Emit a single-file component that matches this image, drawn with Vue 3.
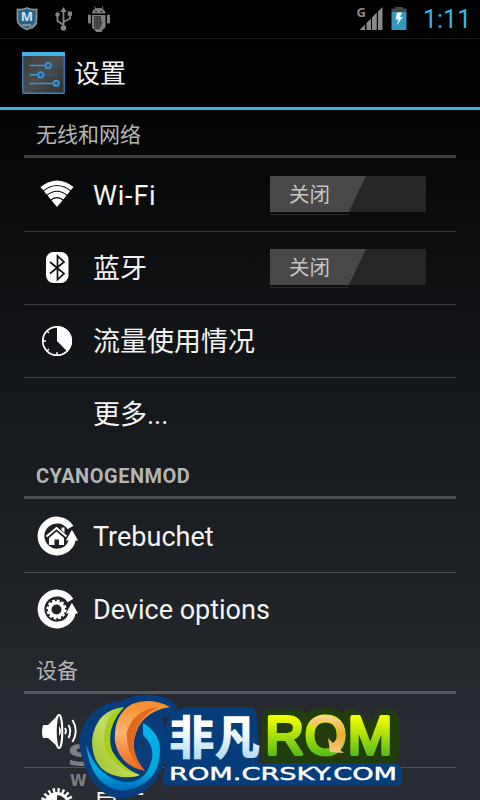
<template>
  <div class="screen">
    <div class="status-bar">
      <svg class="status-left" width="120" height="38" viewBox="0 0 120 38">
        <path d="M17.500 9.500Q22 10 27 8Q32 10 36.500 9.500V20Q36 26 27 29.500Q18 26 17.500 20Z" fill="#24668f" stroke="#8b8f91" stroke-width="1.800" />
        <text x="27" y="21" class="shield-letter">M</text>
        <path d="M22 25H31M29 24L32 28L37 23" stroke="#85929a" stroke-width="1.800" fill="none" />
        <g stroke="#858585" stroke-width="1.800" fill="none">
          <path d="M63.500 28V11M63.500 25L57.500 21V15.500M63.500 22L70 18.500V14" />
        </g>
        <g fill="#858585">
          <path d="M60.300 12L63.500 7L66.700 12Z" />
          <circle cx="63.500" cy="28" r="2.800" />
          <circle cx="57.500" cy="14.500" r="2.200" />
          <rect x="67.700" y="11.500" width="4.300" height="4.300" />
        </g>
        <g fill="#7f7f7f">
          <path d="M92 13.500Q92.500 8 98.700 8T105.500 13.500Z" />
          <path d="M94.500 6.500L96 9.500M103 6.500L101.500 9.500" stroke="#7f7f7f" />
          <path d="M92 15H105.500V27Q105 29 103 29L101.500 32H96L94 29Q92 29 92 27Z" />
          <rect x="88" y="14.500" width="3" height="9" rx="1" />
          <rect x="107" y="14.500" width="3" height="9" rx="1" />
        </g>
        <path d="M94 16H101V20L102.500 22L100 29H95L94 27Z" fill="#3b3b3b" />
        <path d="M95 18H101M95 21H102M95 24H101M95 27H100" stroke="#858585" stroke-width=".8" stroke-dasharray="1.500 1.500" />
        <circle cx="96" cy="11.500" r=".8" /><circle cx="101.500" cy="11.500" r=".8" />
      </svg>
      <svg class="status-right" width="60" height="38" viewBox="350 0 60 38">
        <text x="356.500" y="17.300" class="network">G</text>
        <path d="M359.500 30L365 24.500V30ZM366.500 30V23L371 18.500V30ZM372 30V17.500L376.800 12.500V30ZM378 30V11.500L382.500 7V30Z" fill="#898989" />
        <path d="M391.500 12V8.500H395V7H403V8.500H406.500V12Z" fill="#484848" />
        <rect x="391.500" y="12" width="15" height="18" fill="#3298bf" />
        <path d="M397 12.500H402L400 17H403L396.500 25.500L398.500 19.500H395.500Z" fill="#f1f6f8" />
      </svg>
      <span class="clock">1:11</span>
    </div>

    <header class="action-bar">
      <svg width="44" height="42" viewBox="0 0 44 42">
        <defs>
          <linearGradient id="tile" x1="0" y1="0" x2="1" y2="1">
            <stop offset="0" stop-color="#3c3c3c" />
            <stop offset=".5" stop-color="#4c4c4c" />
            <stop offset="1" stop-color="#303030" />
          </linearGradient>
        </defs>
        <rect x=".75" y=".75" width="41.500" height="40.500" rx="1" fill="url(#tile)" stroke="#2d86c8" stroke-width="1.300" />
        <path d="M0 4V1Q0 0 1 0H42Q43 0 43 1V4Z" fill="#41b4ea" />
        <path d="M7.500 13.500H23.500M7.500 22.800H16M7.500 31.500H31" stroke="#3396e0" stroke-width="1.500" />
        <path d="M29 13.500H36M21 22.800H36" stroke="#275d8a" stroke-width="1.300" />
        <g fill="#3e5568" stroke="#3594dc" stroke-width="1.800">
          <circle cx="26.200" cy="13.500" r="2.700" /><circle cx="18.800" cy="22.800" r="2.700" /><circle cx="34.200" cy="31.300" r="2.700" />
        </g>
      </svg>
      <h1>设置</h1>
    </header>

    <section v-for="section in sections" :key="section.title" class="section">
      <h2 :class="{ latin: section.latin }">{{ section.title }}</h2>
      <div v-for="item in section.items" :key="item.label" class="row">
        <svg class="row-icon" width="48" height="48" viewBox="0 0 48 48">
          <template v-if="item.icon === 'wifi'">
            <path d="M7.500 16Q24 3 40.500 16L24 36Z" fill="#fff" />
            <path d="M9.500 20.500Q24 8.500 38.500 20.500M13 25Q24 15.500 35 25M17 29.700Q24 23.500 31 29.700" stroke="#0a0b0d" stroke-width="1.100" fill="none" />
          </template>
          <template v-if="item.icon === 'bluetooth'">
            <rect x="13" y="8" width="22.500" height="31" rx="7.500" fill="#fff" />
            <path d="M17 18L31 29.500L24.500 35.500V12L31 18L17 29.500" stroke="#0c0e10" stroke-width="1.700" fill="none" />
          </template>
          <template v-if="item.icon === 'usage'">
            <circle cx="24" cy="24" r="14.200" stroke="#fff" stroke-width="1.700" fill="none" />
            <path d="M24 24V9A15 15 0 0 1 34.500 34.800Z" fill="#fff" />
            <path d="M24 38V35M10 24H13M14 14L16 16M14 34L16 32" stroke="#fff" stroke-width="1.300" />
          </template>
          <template v-if="item.icon === 'home' || item.icon === 'gear'">
            <path d="M37.500 15.500A16 16 0 1 0 36.500 34Q39.500 30 39.500 25" stroke="#fff" stroke-width="6.800" fill="none" />
            <path d="M33 28.500L39 17.500L45 28.500Z" fill="#fff" />
            <path d="M33.500 24L38.800 16L43.500 23" stroke="#1c1f23" stroke-width="1.500" fill="none" />
          </template>
          <template v-if="item.icon === 'home'">
            <path d="M13.500 24.500L23.500 16L33.500 24.500" stroke="#fff" stroke-width="2" fill="none" />
            <path d="M16 26L23.500 19.500L31 26V33H26V27.500H21.500V33H16ZM28.500 15.500H31.500V21L28.500 18Z" fill="#fff" />
          </template>
          <template v-if="item.icon === 'gear'">
            <circle cx="23.500" cy="24.500" r="6.800" stroke="#fff" stroke-width="3.600" fill="none" />
            <circle cx="23.500" cy="24.500" r="9" stroke="#fff" stroke-width="2.200" stroke-dasharray="2.800 1.912" fill="none" />
          </template>
          <template v-if="item.icon === 'sound'">
            <path d="M10 18H15L25 8V40L15 31H10Q8 25 10 18Z" fill="#fff" />
            <ellipse cx="26" cy="24.500" rx="3.300" ry="16.500" fill="#292c32" stroke="#fff" stroke-width="2" />
            <path d="M26 19Q30 24 26 29Z" fill="#fff" />
            <path d="M32 21Q34 24 32 27M35.500 18Q39 24 35.500 31M39.500 13Q46 24 39.500 35" stroke="#fff" stroke-width="1.900" fill="none" />
          </template>
          <template v-if="item.icon === 'display'">
            <circle cx="24" cy="25" r="11.500" stroke="#fff" stroke-width="3" fill="none" />
            <circle cx="24" cy="25" r="14.500" stroke="#fff" stroke-width="5" stroke-dasharray="2.300 2.255" fill="none" />
            <path d="M24 13A12 12 0 0 0 24 37Z" fill="#fff" />
          </template>
        </svg>
        <span class="label" :class="item.script">{{ item.label }}</span>
        <div v-if="item.toggle" class="toggle"><span>{{ item.toggle }}</span></div>
      </div>
    </section>

    <svg class="watermark" width="360" height="110" viewBox="60 690 360 110">
      <defs>
        <linearGradient id="lime" gradientUnits="userSpaceOnUse" x1="0" y1="716" x2="0" y2="756">
          <stop offset="0" stop-color="#f7ff00" /><stop offset="1" stop-color="#55bb18" />
        </linearGradient>
        <linearGradient id="ice" gradientUnits="userSpaceOnUse" x1="0" y1="714" x2="0" y2="758">
          <stop offset=".3" stop-color="#fff" /><stop offset="1" stop-color="#b5dcf3" />
        </linearGradient>
        <linearGradient id="leaf" x1="0" y1="1" x2="1" y2="0">
          <stop offset="0" stop-color="#94bf20" /><stop offset=".5" stop-color="#c5dd62" /><stop offset="1" stop-color="#8cbd13" />
        </linearGradient>
        <linearGradient id="flame" x1="0" y1="0" x2="0" y2="1">
          <stop offset="0" stop-color="#f58b2a" /><stop offset=".45" stop-color="#fbb56d" /><stop offset="1" stop-color="#e96518" />
        </linearGradient>
        <linearGradient id="ring" x1="0" y1="0" x2="0" y2="1">
          <stop offset="0" stop-color="#05b4ef" /><stop offset=".75" stop-color="#00a5de" /><stop offset="1" stop-color="#0065b5" />
        </linearGradient>
        <linearGradient id="arrow" x1="0" y1="0" x2="0" y2="1">
          <stop offset="0" stop-color="#fbd795" /><stop offset=".5" stop-color="#f2a92f" /><stop offset="1" stop-color="#f8c88a" />
        </linearGradient>
      </defs>
      <text x="67" y="766" class="ghost ghost-big" textLength="88" lengthAdjust="spacingAndGlyphs">SKY</text>
      <text x="70" y="786" class="ghost ghost-small" textLength="170">WWW.</text>

      <!-- badge and lettering backdrops -->
      <path d="M80 750Q77 733 88 718Q100 702 121 701Q138 692 158 696Q176 699 177 710Q176 716 162 718Q171 740 164 764Q152 796 122 799Q90 796 80 750Z" fill="#073d7b" />
      <path d="M169 717Q175 708 190 707H240Q256 707 256 712L259 748Q262 757 257 763H394Q403 764 402 774V779Q402 786 394 786H170Q161 786 163 777Q164 769 166 765Q162 760 163 755L166 748Q162 744 164 739L167 734Q163 729 169 717Z" fill="#073d7b" />
      <path d="M262 718Q263 709 273 709H294Q301 709 306 713Q313 708 325 708Q337 708 342 713Q347 708 356 709L370 722L382 709Q397 707 399 720V753Q399 763 388 763H272Q260 763 261 752Z" fill="#213d0d" />

      <path d="M143 723Q160 733 160 750Q160 785 123 791Q91 788 86 744Q96 776 123 782Q145 784 151 762Q156 747 143 735Z" fill="url(#ring)" />
      <path d="M143 740V748L141 744Z" fill="#292d33" />
      <path d="M124 707Q96 710 92 740Q92 773 121 777Q134 778 140 775Q120 768 112 751Q101 724 124 707Z" fill="url(#leaf)" />
      <path d="M124 707Q103 716 104 741Q108 768 140 775Q122 768 112 751Q105 728 124 707Z" fill="#a7ce1c" />
      <path d="M170 707Q151 697 132 704Q113 715 115 742Q120 766 145 771Q132 756 134 740Q139 712 170 707Z" fill="url(#flame)" />
      <path d="M159 707Q134 709 127 732Q125 756 145 771Q132 756 134 740Q139 715 159 707Z" fill="#e06b20" />

      <text x="169" y="780" class="site" textLength="228" lengthAdjust="spacingAndGlyphs">ROM.CRSKY.COM</text>
      <text x="169" y="754" class="brand-cn" fill="url(#ice)" textLength="91" lengthAdjust="spacingAndGlyphs">非凡</text>
      <text y="754" class="brand-rom" fill="url(#lime)" stroke="url(#lime)"><tspan x="265.500">R</tspan><tspan x="305">O</tspan><tspan x="348">M</tspan></text>
      <path d="M309 724Q315 714 327 715Q343 717 345 733Q345 742 340 750L344 753L330 752L328 738L333 743Q338 739 338 731Q335 721 325 721Q318 721 315 727Z" fill="url(#arrow)" />
    </svg>
  </div>
</template>

<script setup>
const sections = [
  {
    title: '无线和网络',
    items: [
      { label: 'Wi-Fi', icon: 'wifi', toggle: '关闭', script: 'latin wide' },
      { label: '蓝牙', icon: 'bluetooth', toggle: '关闭' },
      { label: '流量使用情况', icon: 'usage' },
      { label: '更多...', icon: '' }
    ]
  },
  {
    title: 'CYANOGENMOD',
    latin: true,
    items: [
      { label: 'Trebuchet', icon: 'home', script: 'latin' },
      { label: 'Device options', icon: 'gear', script: 'latin' }
    ]
  },
  {
    title: '设备',
    items: [
      { label: '声音', icon: 'sound' },
      { label: '显示', icon: 'display' }
    ]
  }
]
</script>

<style>
body {
  background: #000;
  overflow: hidden;
}
</style>

<style scoped>
.screen {
  position: relative;
  width: 480px;
  height: 800px;
  overflow: hidden;
  background: linear-gradient(#000 0, #020303 100px, #0b0c0e 220px, #15181b 400px, #1e2226 580px, #272b31 720px, #292d33 800px);
  color: #f3f3f3;
  font-family: Roboto, "Noto Sans CJK SC", sans-serif;
}

.status-bar {
  display: flex;
  height: 38px;
  background: #000;
  border-bottom: 1px solid #171717;
}

.status-right {
  margin-left: 230px;
}

.clock {
  margin-left: 13px;
  color: #33b5e5;
  font-size: 25px;
  line-height: 40px;
  font-weight: 400;
}

.shield-letter {
  font: bold 13px "Open Sans", sans-serif;
  fill: #d5e1e8;
  text-anchor: middle;
}

.network {
  font: bold 13px "Open Sans", sans-serif;
  fill: #898989;
}

.action-bar {
  display: flex;
  height: 68px;
  padding-left: 22px;
  align-items: center;
  border-bottom: 3px solid #33b5e5;
}

h1 {
  margin: 0 0 0 8px;
  padding-bottom: 3px;
  font-size: 26px;
  font-weight: 400;
}

.section {
  padding: 0 24px;
}

h2 {
  height: 45px;
  margin: 0 0 1px;
  padding-left: 12px;
  border-bottom: 3px solid rgba(255, 255, 255, 0.22);
  color: #b5b5b5;
  font-size: 21px;
  font-weight: 400;
  line-height: 50px;
}

h2.latin {
  font-size: 20px;
  font-weight: 700;
  letter-spacing: 0.5px;
}

.row {
  display: flex;
  height: 72px;
  align-items: center;
  border-bottom: 1px solid rgba(255, 255, 255, 0.18);
}

.row:last-child {
  border-bottom-color: transparent;
}

.row-icon {
  flex: none;
  margin: 0 12px 0 9px;
}

.label {
  padding-bottom: 4px;
  font-size: 27px;
  white-space: nowrap;
}

.label.latin {
  padding: 2px 0 0;
}

.label.wide {
  letter-spacing: 0.8px;
}

.toggle {
  width: 156px;
  height: 36px;
  margin: 0 30px 2px auto;
  background: #252626;
}

.toggle::after {
  content: "";
  display: block;
  width: 79px;
  height: 1px;
  margin-top: 2px;
  background: #25272a;
}

.toggle span {
  display: block;
  width: 77px;
  height: 36px;
  padding-left: 19px;
  background: #484848;
  clip-path: polygon(0 0, 100% 0, 82% 100%, 0 100%);
  color: #c4c4c4;
  font-size: 20.5px;
  line-height: 39px;
}

.watermark {
  position: absolute;
  left: 60px;
  top: 690px;
}

.ghost {
  font-family: "DejaVu Sans", sans-serif;
  font-weight: 700;
  fill: #a8aaad;
  opacity: 0.65;
}

.ghost-big {
  font-size: 31px;
}

.ghost-small {
  font-size: 15px;
}

.brand-cn {
  font-family: "Noto Sans CJK SC", sans-serif;
  font-size: 46px;
  font-weight: 900;
}

.brand-rom {
  font-family: "Liberation Sans", sans-serif;
  font-size: 53px;
  stroke-width: 4px;
  stroke-linejoin: round;
}

.site {
  font-family: "DejaVu Sans", sans-serif;
  font-size: 17px;
  fill: #fff;
  stroke: #fff;
  stroke-width: 0.4px;
}
</style>
